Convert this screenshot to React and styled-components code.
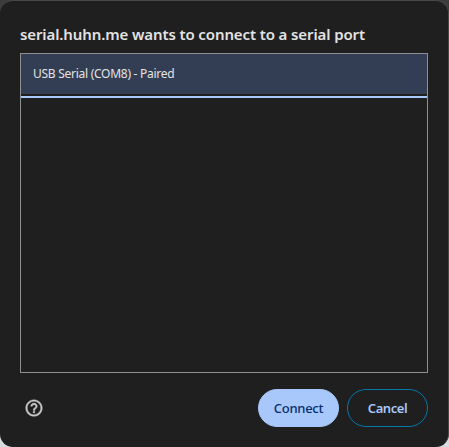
import React from "react";
import styled, { createGlobalStyle } from "styled-components";

const GlobalStyle = createGlobalStyle`
  *, *::before, *::after { box-sizing: border-box; }
  html, body { margin: 0; height: 100%; overflow: hidden; }
  body {
    background: linear-gradient(#3b3c3e 0 50%, #d5dde0 50%);
    font-family: "Noto Sans", "Open Sans", sans-serif;
  }
`;

const Dialog = styled.main`
  display: flex;
  flex-direction: column;
  width: 449px;
  height: 447px;
  padding: 23px 20px 20px;
  background: #1f1f1f;
  border: solid #474747;
  border-width: 1px 1px 0 0;
  border-radius: 13px;
`;

const Title = styled.h1`
  margin: 0;
  height: 29px;
  font-size: 15px;
  font-weight: 600;
  line-height: 20px;
  letter-spacing: -0.11px;
  white-space: nowrap;
  color: #e3e3e3;
`;

const PortList = styled.ul`
  width: 408px;
  height: 320px;
  margin: 0;
  padding: 0;
  list-style: none;
  border: 1px solid #8e918f;
`;

const PortRow = styled.li`
  height: 40px;
  padding-left: 12px;
  font-size: 12px;
  line-height: 40px;
  letter-spacing: -0.27px;
  white-space: nowrap;
  color: #e3e3e3;
  background: #333e55;
`;

const FocusLine = styled.li`
  height: 4px;
  border-bottom: 2px solid #a8c7fa;
`;

const Footer = styled.footer`
  display: flex;
  align-items: center;
  gap: 8px;
  width: 408px;
  margin-top: 16px;
`;

const HelpButton = styled.button`
  display: flex;
  margin: 0 auto 0 4px;
  padding: 0;
  border: 0;
  background: none;
  color: #c7c7c7;
`;

const Button = styled.button`
  width: 81px;
  height: 38px;
  padding: 0;
  border: 1px solid ${(p) => (p.$primary ? "#a8c7fa" : "#0478ad")};
  border-radius: 19px;
  background: ${(p) => (p.$primary ? "#a8c7fa" : "transparent")};
  color: ${(p) => (p.$primary ? "#062e6f" : "#a8c7fa")};
  font-family: inherit;
  font-size: 13px;
  font-weight: ${(p) => (p.$primary ? 500 : 600)};
  line-height: 20px;
  letter-spacing: ${(p) => (p.$primary ? "-0.28px" : "-0.45px")};
`;

const HelpIcon = () => (
  <svg width="20" height="20" viewBox="0 0 24 24" fill="currentColor" stroke="currentColor" strokeWidth="0.4">
    <path d="M11 18h2v-2h-2v2zm1-16C6.48 2 2 6.48 2 12s4.480 10 10 10 10-4.480 10-10S17.520 2 12 2zm0 18c-4.410 0-8-3.590-8-8s3.590-8 8-8 8 3.590 8 8-3.590 8-8 8zm0-14c-2.210 0-4 1.790-4 4h2c0-1.100.9-2 2-2s2 .9 2 2c0 2-3 1.750-3 5h2c0-2.250 3-2.500 3-5 0-2.210-1.790-4-4-4z" />
  </svg>
);

export default function App() {
  return (
    <>
      <GlobalStyle />
      <Dialog>
        <Title>serial.huhn.me wants to connect to a serial port</Title>
        <PortList>
          <PortRow>USB Serial (COM8) - Paired</PortRow>
          <FocusLine aria-hidden="true" />
        </PortList>
        <Footer>
          <HelpButton aria-label="Help">
            <HelpIcon />
          </HelpButton>
          <Button $primary>Connect</Button>
          <Button>Cancel</Button>
        </Footer>
      </Dialog>
    </>
  );
}
